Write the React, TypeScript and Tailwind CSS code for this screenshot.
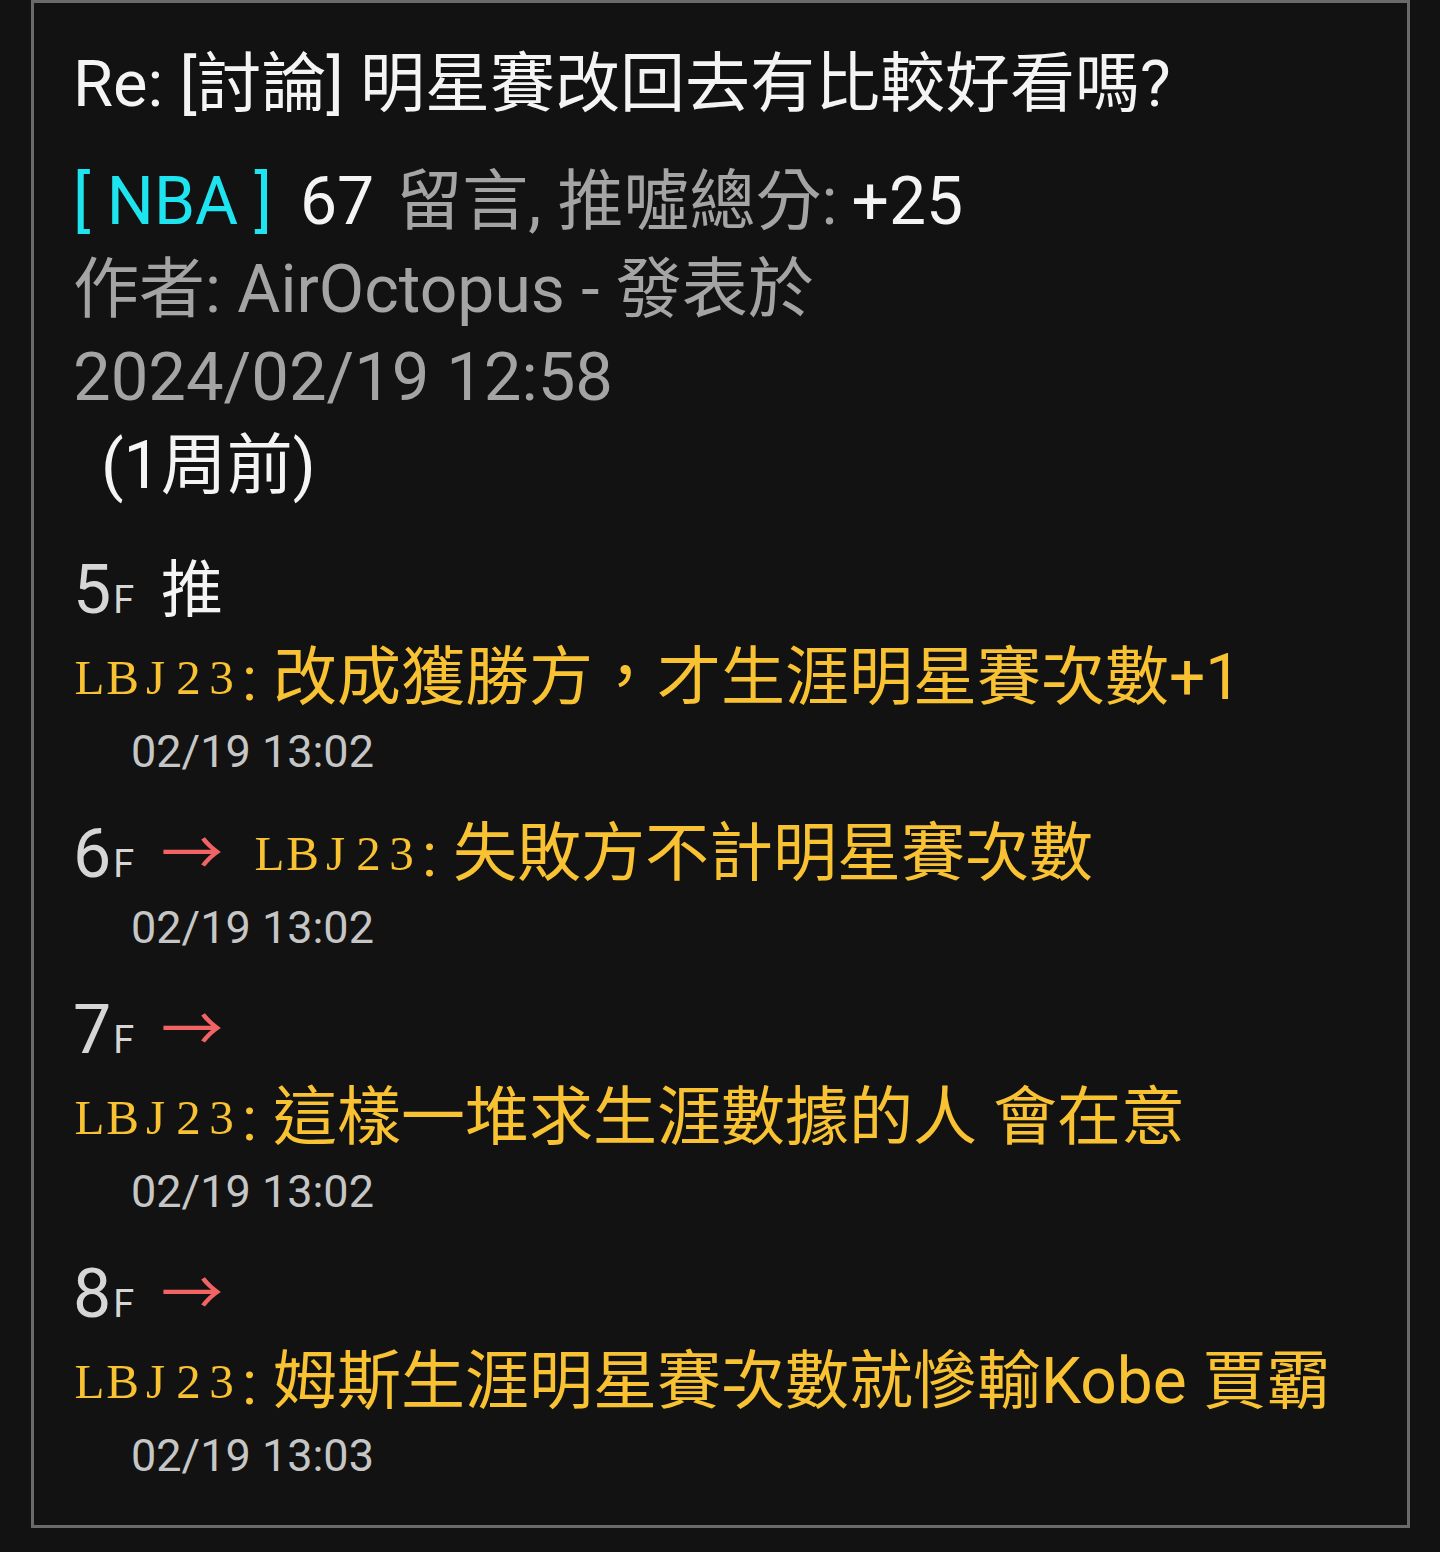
const sans = "font-['Roboto','Noto_Sans_CJK_TC',sans-serif]";

type Floor = {
  no: number;
  tag: "推" | "→";
  inline: boolean;
  text: string;
  time: string;
};

const floors: Floor[] = [
  { no: 5, tag: "推", inline: false, text: "改成獲勝方，才生涯明星賽次數+1", time: "02/19 13:02" },
  { no: 6, tag: "→", inline: true, text: "失敗方不計明星賽次數", time: "02/19 13:02" },
  { no: 7, tag: "→", inline: false, text: "這樣一堆求生涯數據的人 會在意", time: "02/19 13:02" },
  { no: 8, tag: "→", inline: false, text: "姆斯生涯明星賽次數就慘輸Kobe 賈霸", time: "02/19 13:03" },
];

function UserId({ id }: { id: string }) {
  return (
    <span className="flex items-center text-[#f8c232]">
      {id.split("").map((c, i) => (
        <span
          key={i}
          className="inline-block w-[33px] text-center font-['Liberation_Serif',serif] text-[49px]"
        >
          {c}
        </span>
      ))}
      <span className="ml-[4px] mr-[16px] text-[62px]">:</span>
    </span>
  );
}

function Comment({ text }: { text: string }) {
  return (
    <div className="flex h-[88px] items-center whitespace-nowrap">
      <UserId id="LBJ23" />
      <span className="text-[64px] text-[#f8c232]">{text}</span>
    </div>
  );
}

function FloorBlock({ floor }: { floor: Floor }) {
  return (
    <div className="mt-[28px]">
      <div className="flex h-[88px] items-center whitespace-nowrap">
        <span className="flex w-[88px] items-baseline text-[#d6d6d6]">
          <span className="text-[68px]">{floor.no}</span>
          <span className="ml-[2px] text-[38px]">F</span>
        </span>
        {floor.tag === "推" ? (
          <span className="text-[62px] text-[#f4f4f4]">推</span>
        ) : (
          <span className="text-[62px] text-[#f26464]">→</span>
        )}
        {floor.inline && (
          <span className="ml-[30px] flex items-center">
            <UserId id="LBJ23" />
            <span className="text-[64px] text-[#f8c232]">{floor.text}</span>
          </span>
        )}
      </div>
      {!floor.inline && <Comment text={floor.text} />}
      <div className="flex h-[60px] items-center pl-[58px] text-[45px] text-[#c6c6c6]">
        {floor.time}
      </div>
    </div>
  );
}

export default function App() {
  return (
    <div className={`min-h-[1552px] bg-[#121212] pl-[31px] ${sans}`}>
      <div className="h-[1528px] w-[1379px] border-[3px] border-[#6a6a6a] bg-[#121212] px-[39px] pt-[38px]">
        <div className="flex h-[88px] items-center whitespace-nowrap text-[65px] text-[#f4f4f4]">
          Re: [討論] 明星賽改回去有比較好看嗎?
        </div>
        <div className="mt-[28px] flex h-[88px] items-center whitespace-nowrap text-[66px]">
          <span className="text-[#1de4ee]">[ NBA ]</span>
          <span className="ml-[28px] text-[#f4f4f4]">67</span>
          <span className="ml-[22px] text-[#a4a4a4]">留言, 推噓總分:</span>
          <span className="ml-[14px] text-[#f4f4f4]">+25</span>
        </div>
        <div className="flex h-[88px] items-center whitespace-nowrap text-[66px] text-[#a4a4a4]">
          作者: AirOctopus - 發表於
        </div>
        <div className="flex h-[88px] items-center whitespace-nowrap text-[67px] text-[#a4a4a4]">
          2024/02/19 12:58
        </div>
        <div className="flex h-[88px] items-center whitespace-nowrap pl-[28px] text-[66px] text-[#f4f4f4]">
          (1周前)
        </div>
        <div className="pt-[9px]">
          {floors.map((f) => (
            <FloorBlock key={f.no} floor={f} />
          ))}
        </div>
      </div>
    </div>
  );
}
